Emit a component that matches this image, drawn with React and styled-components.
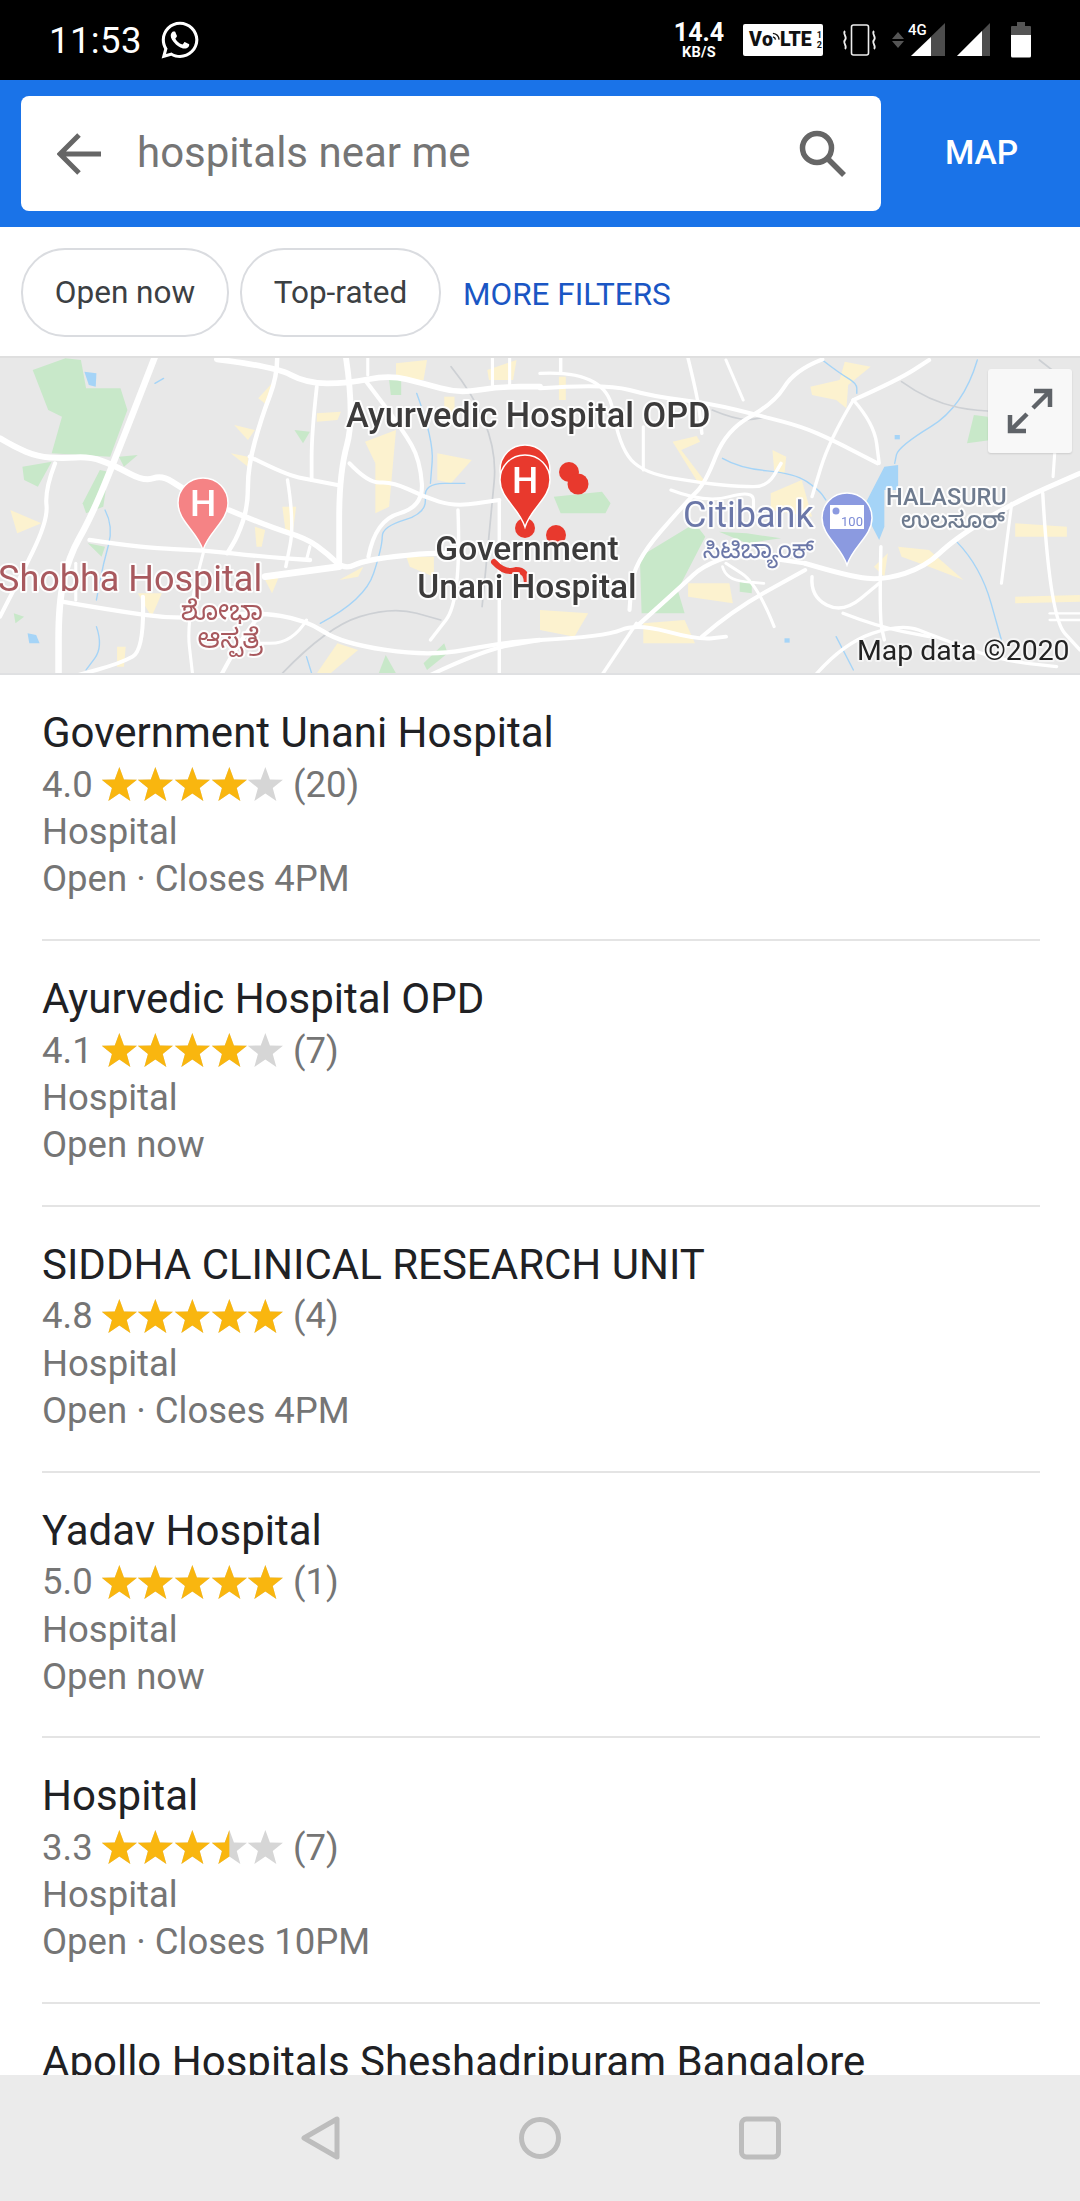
import React from "react";
import styled, { createGlobalStyle } from "styled-components";
import { FaWhatsapp } from "react-icons/fa";

const Global = createGlobalStyle`
  html, body { margin: 0; padding: 0; background: #fff; }
  body { font-family: Roboto, "Liberation Sans", sans-serif; }
  * { box-sizing: border-box; }
`;

const Page = styled.div`
  width: 1080px; height: 2201px; display: flex; flex-direction: column; overflow: hidden; background: #fff;
`;

/* status bar */
const StatusBar = styled.div`
  height: 80px; flex: none; background: #000; color: #fff; display: flex; align-items: center; padding: 0 49px 0 49px;
`;
const Clock = styled.span` font-size: 36.5px; letter-spacing: 0.4px; margin-right: 17px; `;
const StatusRight = styled.div` margin-left: auto; display: flex; align-items: center; `;
const Speed = styled.div`
  display: flex; flex-direction: column; align-items: center; width: 50px; margin-right: 19px; font-weight: 700;
`;
const SpeedValue = styled.span` font-size: 25px; line-height: 24px; `;
const SpeedUnit = styled.span` font-size: 14.5px; line-height: 15px; letter-spacing: 0.3px; `;
const VolteBadge = styled.div`
  width: 80px; height: 32px; background: #fff; border-radius: 2px; color: #111; display: flex; align-items: center;
  padding-left: 6px; font-size: 19.5px; font-weight: 900; line-height: 1; margin-right: 19px; overflow: hidden;
`;
const VolteFraction = styled.span`
  display: flex; flex-direction: column; align-items: center; font-size: 9px; line-height: 10px; margin-left: 5px; font-weight: 700;
`;
const StatusIcon = styled.svg` display: block; flex: none; margin-right: ${p => p.$gap || 0}px; `;

/* header */
const Header = styled.div`
  height: 147px; flex: none; background: #1a73e8; display: flex; align-items: center; padding-left: 21px;
`;
const SearchBox = styled.div`
  width: 860px; height: 115px; background: #fff; border-radius: 8px; display: flex; align-items: center; padding: 0 35px 0 36px;
`;
const SearchText = styled.span` font-size: 42px; color: #757575; margin-left: 36px; flex: 1; margin-top: -3px; `;
const MapButton = styled.span` font-size: 33.5px; font-weight: 500; color: #fff; margin: -2px 0 0 64px; `;

/* chips */
const Filters = styled.div`
  height: 129px; flex: none; display: flex; align-items: center; padding-left: 21px; background: #fff;
`;
const Chip = styled.div`
  height: 89px; border: 2.5px solid #dadce0; border-radius: 44px; font-size: 31.5px; color: #3c4043;
  display: flex; align-items: center; margin: 2px 11px 0 0; width: ${p => p.$w}px; justify-content: center;
`;
const MoreFilters = styled.span` font-size: 31.5px; color: #1a56c4; margin-left: 11px; margin-top: 6px; `;

/* map */
const MapPanel = styled.div`
  position: relative; height: 319px; flex: none; background: #e8e8e8; overflow: hidden;
  border-top: 2px solid #dfdfdf; border-bottom: 2px solid #dfe0e2;
`;
const MapCanvas = styled.svg` display: block; width: 1080px; height: 315px; filter: blur(0.55px); `;
const ExpandButton = styled.div`
  position: absolute; left: 988px; top: 11px; width: 84px; height: 84px; background: #f8f8f8; border-radius: 3px;
  box-shadow: 0 1px 2px rgba(0,0,0,.12); display: flex; align-items: center; justify-content: center;
`;

/* list */
const List = styled.div` flex: 1; min-height: 0; overflow: hidden; padding: 0 40px 0 42px; `;
const Item = styled.div`
  height: 265.6px; padding-top: 31px; border-bottom: 2px solid #e4e4e4;
  &:first-child { height: 266.4px; }
`;
const Title = styled.div` font-size: 42px; line-height: 54px; color: #202124; white-space: nowrap; `;
const Rating = styled.div`
  display: flex; align-items: center; font-size: 36.5px; line-height: 47px; color: #757575; height: 48px;
`;
const Stars = styled.div` display: flex; margin: 0 9px 0 8px; `;
const Line = styled.div` font-size: 36.5px; line-height: 47px; color: #757575; `;

/* nav */
const NavBar = styled.div`
  height: 126px; flex: none; background: #ebebeb; display: flex; align-items: center; justify-content: center; gap: 178px; padding-left: 2px;
`;

const starPath = "M18 1 L22.6 13.4 L35.6 13.8 L25.4 22 L29 35 L18 27.6 L7 35 L10.6 22 L0.4 13.8 L13.4 13.4 Z";
function Star({ fill }) {
  const id = React.useId();
  return (
    <svg width="36.7" height="36" viewBox="0 0 36 36">
      <path d={starPath} fill="#d6d6d6" />
      {fill > 0 && (
        <>
          <clipPath id={id}><rect x="0" y="0" width={36 * fill} height="36" /></clipPath>
          <path d={starPath} fill="#f9b60f" clipPath={`url(#${id})`} />
        </>
      )}
    </svg>
  );
}

const places = [
  ["Government Unani Hospital", "4.0", [1,1,1,1,0], "(20)", "Open · Closes 4PM"],
  ["Ayurvedic Hospital OPD", "4.1", [1,1,1,1,0], "(7)", "Open now"],
  ["SIDDHA CLINICAL RESEARCH UNIT", "4.8", [1,1,1,1,1], "(4)", "Open · Closes 4PM"],
  ["Yadav Hospital", "5.0", [1,1,1,1,1], "(1)", "Open now"],
  ["Hospital", "3.3", [1,1,1,0.5,0], "(7)", "Open · Closes 10PM"],
  ["Apollo Hospitals Sheshadripuram Bangalore"],
];

const pts = a => a.map(p => p.join(",")).join(" ");
/* rounds the corners of a traced line: quadratic curves through the midpoints */
const smooth = a => {
  let d = `M${a[0][0]} ${a[0][1]}`;
  for (let i = 1; i < a.length - 1; i++) {
    const mx = (a[i][0] + a[i + 1][0]) / 2, my = (a[i][1] + a[i + 1][1]) / 2;
    d += ` Q${a[i][0]} ${a[i][1]} ${mx} ${my}`;
  }
  const l = a[a.length - 1];
  return d + ` L${l[0]} ${l[1]}`;
};

const leftRoads = [
  [19, [[450,20],[330,340],[260,510],[200,620],[170,760],[170,980]]],
  [18, [[0,265],[40,290],[110,320],[180,325],[260,320],[330,345],[420,395],[470,375],[530,415]]],
  [16, [[665,480],[780,530],[890,565],[950,610],[1000,660],[1060,630],[1230,610],[1290,610]]],
  [13, [[260,570],[420,595],[590,600],[760,620],[900,630]]],
  [17, [[630,28],[800,50],[890,100],[1010,100],[1130,75],[1230,100],[1330,130],[1450,110],[1568,110]]],
  [13, [[805,25],[805,80],[760,200],[720,350],[720,470],[690,560],[660,610]]],
  [11, [[920,110],[905,250],[905,390]]],
  [12, [[725,320],[830,375],[905,390],[980,405]]],
  [17, [[1005,25],[1030,200],[985,370],[985,640]]],
  [10, [[835,390],[855,520],[830,650]]],
  [12, [[1015,340],[1070,400],[1140,395],[1230,440],[1320,470],[1450,450]]],
  [12, [[1070,620],[1090,510],[1230,470],[1220,330],[1170,240],[1060,90]]],
  [20, [[770,680],[985,650]]],
  [13, [[180,755],[320,780],[520,810],[740,785],[890,810],[990,880],[1250,920],[1450,880],[1568,870]]],
  [12, [[160,340],[130,420],[140,510],[50,700],[0,800]]],
  [9, [[590,610],[540,800],[560,980]]],
  [12, [[1240,980],[1400,900],[1568,870]]],
  [10, [[1330,480],[1340,750],[1250,870]]],
  [10, [[1450,450],[1450,980]]],
  [12, [[415,740],[420,900],[350,940],[210,980]]],
  [12, [[640,980],[680,900],[750,800]]],
  [9, [[890,810],[850,880],[720,880]]],
  [9, [[1068,25],[1068,75]]],
  [9, [[1430,25],[1430,110]]],
  [9, [[1480,25],[1480,110]]],
  [9, [[220,640],[220,750]]],
  [9, [[900,590],[890,630]]],
];
const rightRoads = [
  [10, [[0,70],[190,60],[230,290],[300,370],[480,400],[580,410],[660,410],[700,340]]],
  [10, [[60,25],[60,70]]],
  [10, [[430,25],[460,150],[470,250]]],
  [12, [[0,115],[190,100],[330,140],[495,160],[650,200],[760,230],[850,270],[980,340]]],
  [12, [[820,28],[740,60],[680,160],[540,240],[480,400],[430,450],[270,640],[260,780]]],
  [12, [[910,150],[1040,90],[1130,30]]],
  [10, [[910,150],[840,270],[790,440]]],
  [10, [[910,150],[970,220],[985,340]]],
  [13, [[280,830],[420,700],[470,650],[570,610],[770,640]]],
  [15, [[770,640],[900,680],[1000,690],[1120,650],[1200,570],[1370,460],[1568,370]]],
  [12, [[470,860],[560,780],[770,660]]],
  [10, [[790,680],[785,740],[880,790],[985,700]]],
  [10, [[880,790],[980,830],[1130,860]]],
  [10, [[990,590],[985,800],[1000,870]]],
  [12, [[0,870],[190,860],[280,820],[460,870],[540,860]]],
  [9, [[680,830],[630,700],[540,640]]],
  [9, [[1340,700],[1370,460]]],
  [10, [[1460,430],[1480,800],[1568,900]]],
  [10, [[800,975],[880,880],[1050,820],[1150,860],[1330,930],[1500,950]]],
  [9, [[1500,230],[1490,380]]],
  [7, [[1480,790],[1568,790]]],
  [7, [[1480,810],[1568,810]]],
  [10, [[180,975],[280,820]]],
  [9, [[540,30],[590,150]]],
  [9, [[300,230],[300,360]]],
  [9, [[380,420],[480,460],[620,420],[620,480]]],
  [8, [[530,650],[540,690],[650,700]]],
];
const leftGreen = [
  [[95,60],[190,25],[235,30],[250,115],[350,115],[370,180],[320,320],[150,310],[180,200],[140,180]],
  [[65,350],[150,335],[110,410],[70,390]],
  [[240,460],[290,360],[315,365],[300,470],[250,490]],
  [[345,320],[400,315],[360,350]],
  [[855,240],[900,245],[880,280]],
  [[1130,90],[1165,90],[1165,135],[1135,135]],
  [[255,580],[305,590],[295,620]],
  [[1230,940],[1290,880],[1300,910],[1240,960]],
  [[1100,970],[1120,915],[1150,970]],
  [[40,790],[70,800],[45,820]],
];
const leftYellow = [
  [[1060,275],[1150,240],[1130,470],[1090,490],[1090,340]],
  [[1270,310],[1370,330],[1310,400],[1270,390]],
  [[30,480],[120,520],[50,550]],
  [[680,225],[740,240],[720,270]],
  [[670,310],[720,320],[720,350]],
  [[750,145],[790,100],[775,165]],
  [[1150,40],[1240,30],[1230,90],[1150,90]],
  [[920,190],[990,185],[980,210],[920,215]],
  [[820,470],[860,470],[850,550],[830,550]],
  [[740,530],[770,540],[760,590],[745,590]],
  [[920,970],[980,880],[1040,900],[960,970]],
  [[1180,620],[1260,620],[1260,680],[1190,650]],
  [[1415,60],[1500,30],[1490,90],[1420,90]],
  [[985,690],[1055,650],[1040,680]],
  [[770,690],[810,680],[790,730]],
  [[400,730],[470,730],[440,800]],
  [[340,890],[365,890],[360,950],[340,950]],
  [[1290,140],[1320,140],[1320,190],[1290,190]],
];
const rightGreen = [
  [[290,620],[450,520],[480,560],[400,720],[420,790],[295,790]],
  [[40,440],[180,425],[205,460],[190,490],[60,490]],
  [[1240,280],[1260,195],[1300,200],[1310,270]],
  [[520,545],[600,550],[700,565],[600,580]],
  [[580,690],[615,690],[615,730],[580,725]],
];
const rightYellow = [
  [[0,780],[140,790],[100,860],[0,840]],
  [[300,820],[420,810],[450,880],[300,880]],
  [[430,700],[550,700],[560,760],[430,740]],
  [[670,430],[760,390],[790,500],[670,480]],
  [[675,300],[715,320],[710,370],[680,360]],
  [[785,110],[870,90],[885,35],[960,50],[895,105],[890,175],[860,150],[790,135]],
  [[385,275],[455,258],[465,275],[410,300],[480,395],[460,400]],
  [[1040,590],[1130,600],[1230,690],[1130,650],[1050,620]],
  [[1380,520],[1530,530],[1530,560],[1380,560]],
  [[1380,740],[1568,735],[1568,755],[1380,760]],
  [[970,650],[1010,610],[1000,680]],
  [[55,80],[75,80],[75,150],[55,150]],
];

const LEFT = "scale(0.34435,0.3333) translate(0,-24)";
const RIGHT = "translate(540,0) scale(0.34435,0.3333) translate(0,-24)";

function Layer({ transform, roads, green, yellow, rivers, rails, water }) {
  return (
    <g transform={transform} fill="none" strokeLinejoin="round" strokeLinecap="round">
      {yellow.map((p, i) => <polygon key={i} points={pts(p)} fill="#fcf2cf" />)}
      {green.map((p, i) => <polygon key={i} points={pts(p)} fill="#c8e8c9" />)}
      {water.map((p, i) => <polygon key={i} points={pts(p)} fill="#a5d4f7" />)}
      {rivers.map((p, i) => <path key={i} d={smooth(p)} stroke="#a5d4f7" strokeWidth="4" />)}
      {rails.map((p, i) => <path key={i} d={smooth(p)} stroke="#cdd0d4" strokeWidth="5" />)}
      {roads.map(([w, p], i) => <path key={i} d={smooth(p)} stroke="#fff" strokeWidth={w} />)}
    </g>
  );
}

const pin = "M0 -25 C14 -25 25 -14 25 0 C25 18 6 28 0 47 C-6 28 -25 18 -25 0 C-25 -14 -14 -25 0 -25 Z";
const halo = { paintOrder: "stroke", stroke: "rgba(255,255,255,.9)", strokeWidth: 4, strokeLinejoin: "round" };
const kn = "'Noto Sans Kannada','Noto Sans',sans-serif";

function MapArt() {
  return (
    <MapCanvas viewBox="0 0 1080 315" fontFamily="Roboto, sans-serif">
      <rect width="1080" height="315" fill="#e8e8e8" />
      <Layer transform={LEFT} roads={leftRoads} green={leftGreen} yellow={leftYellow}
        water={[[[245,65],[280,70],[278,110],[258,105]], [[80,850],[105,855],[115,880],[85,880]]]}
        rivers={[
          [[305,480],[330,530],[300,640],[280,750]], [[280,830],[300,890],[250,960]],
          [[930,820],[1060,750],[1110,590],[1110,530],[1240,490],[1230,400],[1350,400]],
          [[1210,130],[1260,270],[1250,400]], [[450,100],[475,85]], [[890,920],[905,970]],
        ]}
        rails={[[[820,970],[950,830],[1140,770],[1280,810]], [[1310,50],[1450,230],[1420,560],[1400,770]]]}
      />
      <Layer transform={RIGHT} roads={rightRoads} green={rightGreen} yellow={rightYellow}
        water={[[[940,470],[1000,350],[1040,345],[1040,420],[1000,420],[1000,530],[985,570],[965,530]], [[1030,255],[1045,255],[1045,268],[1030,268]], [[710,865],[725,865],[725,878],[710,878]]]}
        rivers={[
          [[820,30],[870,70],[920,100],[920,130]], [[1270,30],[1230,170],[1040,290],[1030,340]],
          [[530,325],[580,355],[740,370],[810,420],[830,450]], [[1210,575],[1280,650],[1340,870]], [[860,860],[910,960]],
        ]}
        rails={[[[500,180],[580,215],[660,200]], [[1050,95],[1130,155],[1300,190],[1500,170]], [[1450,30],[1500,70]]]}
      />

      <g transform="translate(525,112)"><path d={pin} fill="#e8392d" stroke="#fff" strokeWidth="1.5" /></g>
      <circle cx="525" cy="170" r="10" fill="#e8392d" />
      <circle cx="569" cy="114" r="10" fill="#e8392d" />
      <circle cx="578" cy="126" r="10.5" fill="#e8392d" />
      <circle cx="556" cy="177" r="10" fill="#e8392d" />
      <path d="M494 204 Q505 216 516 212 Q527 212 527 226" fill="none" stroke="#e8392d" strokeWidth="6" strokeLinecap="round" />

      <text x="346" y="69" fontSize="34.3" fontWeight="500" fill="#3c3b3b" style={halo}>Ayurvedic Hospital OPD</text>
      <text x="527" y="202" fontSize="33.5" fontWeight="500" fill="#3c3b3b" textAnchor="middle" style={halo}>Government</text>
      <text x="527" y="240" fontSize="33.5" fontWeight="500" fill="#3c3b3b" textAnchor="middle" style={halo}>Unani Hospital</text>
      <text x="-2" y="233" fontSize="36" fill="#a8595e" style={halo}>Shobha Hospital</text>
      <text x="263" y="262" fontSize="27" fill="#a8595e" textAnchor="end" style={halo} fontFamily={kn}>ಶೋಭಾ</text>
      <text x="263" y="290" fontSize="27" fill="#a8595e" textAnchor="end" style={halo} fontFamily={kn}>ಆಸ್ಪತ್ರೆ</text>
      <text x="683" y="169" fontSize="36" fill="#6b77a8" style={halo}>Citibank</text>
      <text x="814" y="200" fontSize="25" fill="#6b77a8" textAnchor="end" style={halo} fontFamily={kn}>ಸಿಟಿಬ್ಯಾಂಕ್</text>
      <text x="886" y="147" fontSize="23.5" fontWeight="500" fill="#6e7b8f" style={halo}>HALASURU</text>
      <text x="1005" y="170" fontSize="23" fontWeight="500" fill="#6e7b8f" textAnchor="end" style={halo} fontFamily={kn}>ಉಲಸೂರ್</text>
      <text x="857" y="302" fontSize="28.4" fill="#222" style={{ ...halo, stroke: "rgba(255,255,255,.55)" }}>Map data ©2020</text>

      <g transform="translate(203,145)">
        <path d={pin} fill="#f58385" stroke="#fff" strokeWidth="1.5" />
        <text y="13" textAnchor="middle" fontSize="37" fontWeight="500" fill="#fff">H</text>
      </g>
      <g transform="translate(525,122)">
        <path d={pin} fill="#e8392d" stroke="#fff" strokeWidth="1.5" />
        <text y="13" textAnchor="middle" fontSize="37" fontWeight="500" fill="#fff">H</text>
      </g>
      <g transform="translate(847,160)">
        <path d={pin} fill="#8b9ae0" stroke="#fff" strokeWidth="1.5" />
        <rect x="-17" y="-13" width="34" height="24" fill="#fff" />
        <circle cx="-11" cy="-7" r="3.5" fill="#8b9ae0" />
        <text x="5" y="8" textAnchor="middle" fontSize="13" fill="#7c8bd6">100</text>
      </g>
    </MapCanvas>
  );
}

export default function App() {
  return (
    <Page>
      <Global />
      <StatusBar>
        <Clock>11:53</Clock>
        <FaWhatsapp size={42} color="#fff" />
        <StatusRight>
          <Speed>
            <SpeedValue>14.4</SpeedValue>
            <SpeedUnit>KB/S</SpeedUnit>
          </Speed>
          <VolteBadge>
            V<span>o</span>
            <svg width="8" height="14" viewBox="0 0 9 14" style={{ margin: "-8px 0 0 -1px" }} fill="none" stroke="#111" strokeWidth="1.6">
              <path d="M1 4 A8 8 0 0 1 8 11" /><path d="M1 8 A4 4 0 0 1 4 11" />
            </svg>
            LTE
            <VolteFraction><span>1</span><span>2</span></VolteFraction>
          </VolteBadge>
          <StatusIcon width="35" height="32" viewBox="0 0 35 32" $gap={15} fill="none" stroke="#eee">
            <rect x="9.5" y="1" width="17" height="30" rx="2" strokeWidth="1.6" />
            <path d="M3 7 C0 10 6 13 3 16 C0 19 6 22 3 25 M32 7 C29 10 35 13 32 16 C29 19 35 22 32 25" strokeWidth="1.8" />
          </StatusIcon>
          <StatusIcon width="12" height="16" viewBox="0 0 12 16" $gap={6}>
            <path d="M6 0 L12 7 H0 Z M6 16 L12 9 H0 Z" fill="#555" />
          </StatusIcon>
          <StatusIcon width="36" height="36" viewBox="0 0 36 36" $gap={10} style={{ overflow: "visible" }}>
            <path d="M35 1 V34 H1 Z" fill="#4d4d4d" />
            <path d="M21 15 V34 H1 Z" fill="#fff" />
            <text x="-2" y="13" fontSize="15" fontWeight="500" fill="#fff" fontFamily="Roboto, sans-serif">4G</text>
          </StatusIcon>
          <StatusIcon width="35" height="36" viewBox="0 0 35 36" $gap={20}>
            <path d="M34 1 V34 H1 Z" fill="#4d4d4d" />
            <path d="M26 9 V34 H1 Z" fill="#fff" />
          </StatusIcon>
          <StatusIcon width="20" height="36" viewBox="0 0 20 36">
            <path d="M6 0 H14 V4 H19 A1 1 0 0 1 20 5 V13 H0 V5 A1 1 0 0 1 1 4 H6 Z" fill="#555" />
            <path d="M0 13 H20 V34 A1.5 1.5 0 0 1 18.5 35.5 H1.5 A1.5 1.5 0 0 1 0 34 Z" fill="#fff" />
          </StatusIcon>
        </StatusRight>
      </StatusBar>

      <Header>
        <SearchBox>
          <svg width="44" height="42" viewBox="0 0 44 42" fill="none" stroke="#666" strokeWidth="5">
            <path d="M44 21 H4 M22 2 L3 21 L22 40" />
          </svg>
          <SearchText>hospitals near me</SearchText>
          <svg width="47" height="47" viewBox="0 0 47 47" fill="none" stroke="#666" strokeWidth="5.5">
            <circle cx="18" cy="18" r="14.5" />
            <path d="M28 28 L45 45" />
          </svg>
        </SearchBox>
        <MapButton>MAP</MapButton>
      </Header>

      <Filters>
        <Chip $w={208}>Open now</Chip>
        <Chip $w={201}>Top-rated</Chip>
        <MoreFilters>MORE FILTERS</MoreFilters>
      </Filters>

      <MapPanel>
        <MapArt />
        <ExpandButton>
          <svg width="46" height="46" viewBox="0 0 46 46" fill="none" stroke="#5f6368" strokeWidth="4.5">
            <path d="M27 3 H43 V19 M43 3 L26 20 M19 43 H3 V27 M3 43 L20 26" />
          </svg>
        </ExpandButton>
      </MapPanel>

      <List>
        {places.map(([name, score, stars, count, hours]) => (
          <Item key={name}>
            <Title>{name}</Title>
            {score && (
              <>
                <Rating>
                  {score}
                  <Stars>{stars.map((f, i) => <Star key={i} fill={f} />)}</Stars>
                  {count}
                </Rating>
                <Line>Hospital</Line>
                <Line>{hours}</Line>
              </>
            )}
          </Item>
        ))}
      </List>

      <NavBar>
        <svg width="40" height="44" viewBox="0 0 40 44" fill="none" stroke="#bdbdbd" strokeWidth="5" strokeLinejoin="round">
          <path d="M36 3 V41 L3 22 Z" />
        </svg>
        <svg width="42" height="44" viewBox="0 0 42 44" fill="none" stroke="#bdbdbd" strokeWidth="5">
          <circle cx="21" cy="22" r="18.5" />
        </svg>
        <svg width="42" height="44" viewBox="0 0 42 44" fill="none" stroke="#bdbdbd" strokeWidth="5">
          <rect x="2.5" y="3" width="37" height="38" rx="5" />
        </svg>
      </NavBar>
    </Page>
  );
}
